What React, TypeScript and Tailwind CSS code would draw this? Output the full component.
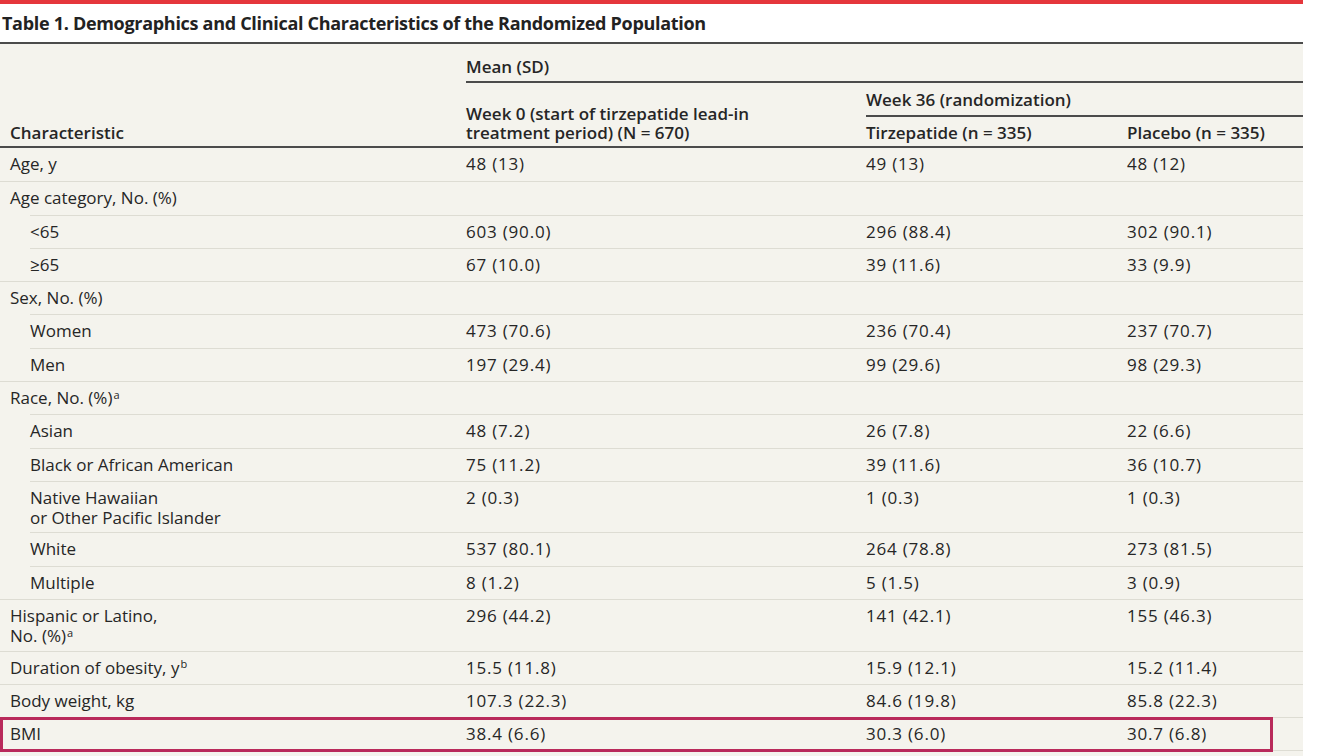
import React from 'react';

type Row = {
  label: React.ReactNode;
  values: [string, string, string];
  sub?: boolean;
  double?: boolean;
};

const Sup = ({ children }: { children: React.ReactNode }) => (
  <sup className="text-[11px] ml-[1px]">{children}</sup>
);

const rows: Row[] = [
  { label: 'Age, y', values: ['48 (13)', '49 (13)', '48 (12)'] },
  { label: 'Age category, No. (%)', values: ['', '', ''] },
  { label: '<65', values: ['603 (90.0)', '296 (88.4)', '302 (90.1)'], sub: true },
  { label: '≥65', values: ['67 (10.0)', '39 (11.6)', '33 (9.9)'], sub: true },
  { label: 'Sex, No. (%)', values: ['', '', ''] },
  { label: 'Women', values: ['473 (70.6)', '236 (70.4)', '237 (70.7)'], sub: true },
  { label: 'Men', values: ['197 (29.4)', '99 (29.6)', '98 (29.3)'], sub: true },
  { label: <>Race, No. (%)<Sup>a</Sup></>, values: ['', '', ''] },
  { label: 'Asian', values: ['48 (7.2)', '26 (7.8)', '22 (6.6)'], sub: true },
  { label: 'Black or African American', values: ['75 (11.2)', '39 (11.6)', '36 (10.7)'], sub: true },
  {
    label: <>Native Hawaiian<br />or Other Pacific Islander</>,
    values: ['2 (0.3)', '1 (0.3)', '1 (0.3)'],
    sub: true,
    double: true,
  },
  { label: 'White', values: ['537 (80.1)', '264 (78.8)', '273 (81.5)'], sub: true },
  { label: 'Multiple', values: ['8 (1.2)', '5 (1.5)', '3 (0.9)'], sub: true },
  {
    label: <>Hispanic or Latino,<br />No. (%)<Sup>a</Sup></>,
    values: ['296 (44.2)', '141 (42.1)', '155 (46.3)'],
    double: true,
  },
  { label: <>Duration of obesity, y<Sup>b</Sup></>, values: ['15.5 (11.8)', '15.9 (12.1)', '15.2 (11.4)'] },
  { label: 'Body weight, kg', values: ['107.3 (22.3)', '84.6 (19.8)', '85.8 (22.3)'] },
];

const BodyRow = ({ row, first }: { row: Row; first: boolean }) => {
  const border = first ? '' : 'border-t border-[#dddcd3]';
  const height = row.double ? 'h-[51.5px]' : 'h-[33.3px]';
  return (
    <div className={`grid grid-cols-[466px_400px_261px_176px] ${height}`}>
      <div className={`${border} ${row.sub ? 'ml-[30px]' : 'pl-[10px]'} pt-[6px] leading-[20px]`}>
        {row.label}
      </div>
      {row.values.map((v, i) => (
        <div key={i} className={`${border} pt-[6px] leading-[20px] tracking-[0.8px]`}>
          {v}
        </div>
      ))}
    </div>
  );
};

const App = () => {
  return (
    <div className="w-[1318px] h-[756px] overflow-hidden bg-white font-['Open_Sans',sans-serif] text-[17px] font-medium text-[#262626]">
      <div className="w-[1303px]">
        <div className="h-[4px] bg-[#e5363c]" />
        <h1 className="h-[40px] border-b-2 border-[#4b4b4b] pl-[2px] pt-[7px] text-[18px] font-bold leading-[24px] tracking-[-0.3px] text-[#222]">
          Table 1. Demographics and Clinical Characteristics of the Randomized Population
        </h1>

        <div className="bg-[#f4f3ed]">
          {/* header */}
          <div className="grid grid-cols-[466px_400px_261px_176px] grid-rows-[39px_34px_29px] border-b-2 border-[#4b4b4b] font-semibold leading-[20px]">
            <div className="row-span-3 flex items-end pb-[3px] pl-[10px]">Characteristic</div>
            <div className="col-span-3 flex items-end border-b-2 border-[#4b4b4b] pb-[4px]">Mean (SD)</div>
            <div className="row-span-2 flex items-end pb-[4px] leading-[19px]">
              Week 0 (start of tirzepatide lead-in
              <br />
              treatment period) (N = 670)
            </div>
            <div className="col-span-2 flex items-end border-b-2 border-[#4b4b4b] pb-[5px]">
              Week 36 (randomization)
            </div>
            <div className="flex items-end pb-[3px]">Tirzepatide (n = 335)</div>
            <div className="flex items-end pb-[3px]">Placebo (n = 335)</div>
          </div>

          {/* body */}
          {rows.map((row, i) => (
            <BodyRow key={i} row={row} first={i === 0} />
          ))}

          {/* BMI, highlighted */}
          <div className="relative">
            <BodyRow row={{ label: 'BMI', values: ['38.4 (6.6)', '30.3 (6.0)', '30.7 (6.8)'] }} first={false} />
            <div className="absolute left-0 top-0 h-[35px] w-[1273px] border-[3px] border-[#b92a5b]" />
          </div>
          <div className="h-[10px] border-t border-[#dddcd3]" />
        </div>
      </div>
    </div>
  );
};

export default App;
